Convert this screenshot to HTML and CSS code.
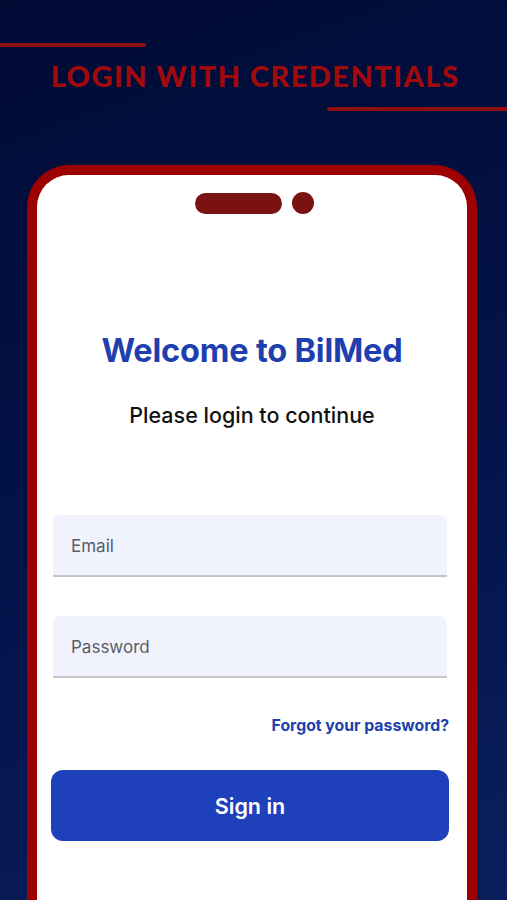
FILE: index.html
```html
<!DOCTYPE html>
<html>
<head>
<meta charset="utf-8">
<link rel="stylesheet" href="styles.css">
</head>
<body>
<div class="screen">
  <div class="deco deco-left"></div>
  <h1 class="title">LOGIN WITH CREDENTIALS</h1>
  <div class="deco deco-right"></div>
  <div class="phone">
    <div class="notch">
      <span class="pill"></span>
      <span class="dot"></span>
    </div>
    <h2 class="welcome">Welcome to BilMed</h2>
    <p class="subtitle">Please login to continue</p>
    <div class="field field-email"><span class="placeholder">Email</span></div>
    <div class="field field-pass"><span class="placeholder">Password</span></div>
    <div class="forgot-row"><a class="forgot">Forgot your password?</a></div>
    <button class="signin">Sign in</button>
  </div>
</div>
</body>
</html>
```

FILE: styles.css
```css
* { box-sizing: border-box; }
html, body { margin: 0; padding: 0; }
body {
  width: 507px;
  height: 900px;
  overflow: hidden;
  font-family: "Inter", "Liberation Sans", sans-serif;
}
.screen {
  width: 507px;
  height: 900px;
  overflow: hidden;
  background: linear-gradient(160deg, #000b34 0%, #03134a 55%, #0a1f5c 100%);
  display: flex;
  flex-direction: column;
  padding-top: 43px;
}
.deco {
  height: 4px;
  background: #8f0e14;
  border-radius: 2px;
  flex: none;
}
.deco-left { width: 146px; border-radius: 0 2px 2px 0; }
.deco-right { width: 180px; margin-left: auto; border-radius: 2px 0 0 2px; }
.title {
  margin: 13px 0 15px 0;
  font-family: "Lato", "Liberation Sans", sans-serif;
  font-weight: 900;
  font-size: 29px;
  line-height: 32px;
  letter-spacing: 1.45px;
  color: #a00a0c;
  text-align: center;
  padding-left: 3px;
}
.phone {
  flex: none;
  margin: 54px 30px 0 27px;
  height: 800px;
  background: #fff;
  border: 10px solid #9c0000;
  border-bottom: none;
  border-radius: 42px 42px 0 0;
  display: flex;
  flex-direction: column;
}
.notch {
  display: flex;
  justify-content: center;
  align-items: center;
  gap: 10px;
  margin-top: 17px;
  padding-left: 5px;
}
.pill {
  width: 87px;
  height: 21px;
  border-radius: 11px;
  background: #7a1212;
}
.dot {
  width: 22px;
  height: 22px;
  border-radius: 50%;
  background: #7a1212;
}
.welcome {
  margin: 117px 0 0 0;
  text-align: center;
  font-size: 32.5px;
  line-height: 40px;
  font-weight: 700;
  color: #1e40af;
  letter-spacing: -0.2px;
}
.subtitle {
  margin: 30px 0 0 0;
  text-align: center;
  font-size: 21.5px;
  line-height: 28px;
  font-weight: 500;
  color: #111;
}
.field {
  margin: 0 20px 0 16px;
  height: 62px;
  background: #f0f3fe;
  border-radius: 8px 8px 0 0;
  border-bottom: 2px solid #c4c5ca;
  display: flex;
  align-items: center;
  padding-left: 18px;
}
.field-email { margin-top: 86px; }
.field-pass { margin-top: 39px; }
.placeholder {
  font-size: 17px;
  color: #5a5d66;
  padding-top: 2px;
}
.forgot-row {
  display: flex;
  justify-content: flex-end;
  margin: 38px 18px 0 0;
}
.forgot {
  font-size: 15.8px;
  line-height: 20px;
  font-weight: 700;
  color: #1e40af;
}
.signin {
  margin: 34px 18px 0 14px;
  height: 71px;
  border: none;
  border-radius: 12px;
  background: #1e40bb;
  color: #fff;
  font-family: "Inter", "Liberation Sans", sans-serif;
  font-size: 21.5px;
  font-weight: 600;
}
```
